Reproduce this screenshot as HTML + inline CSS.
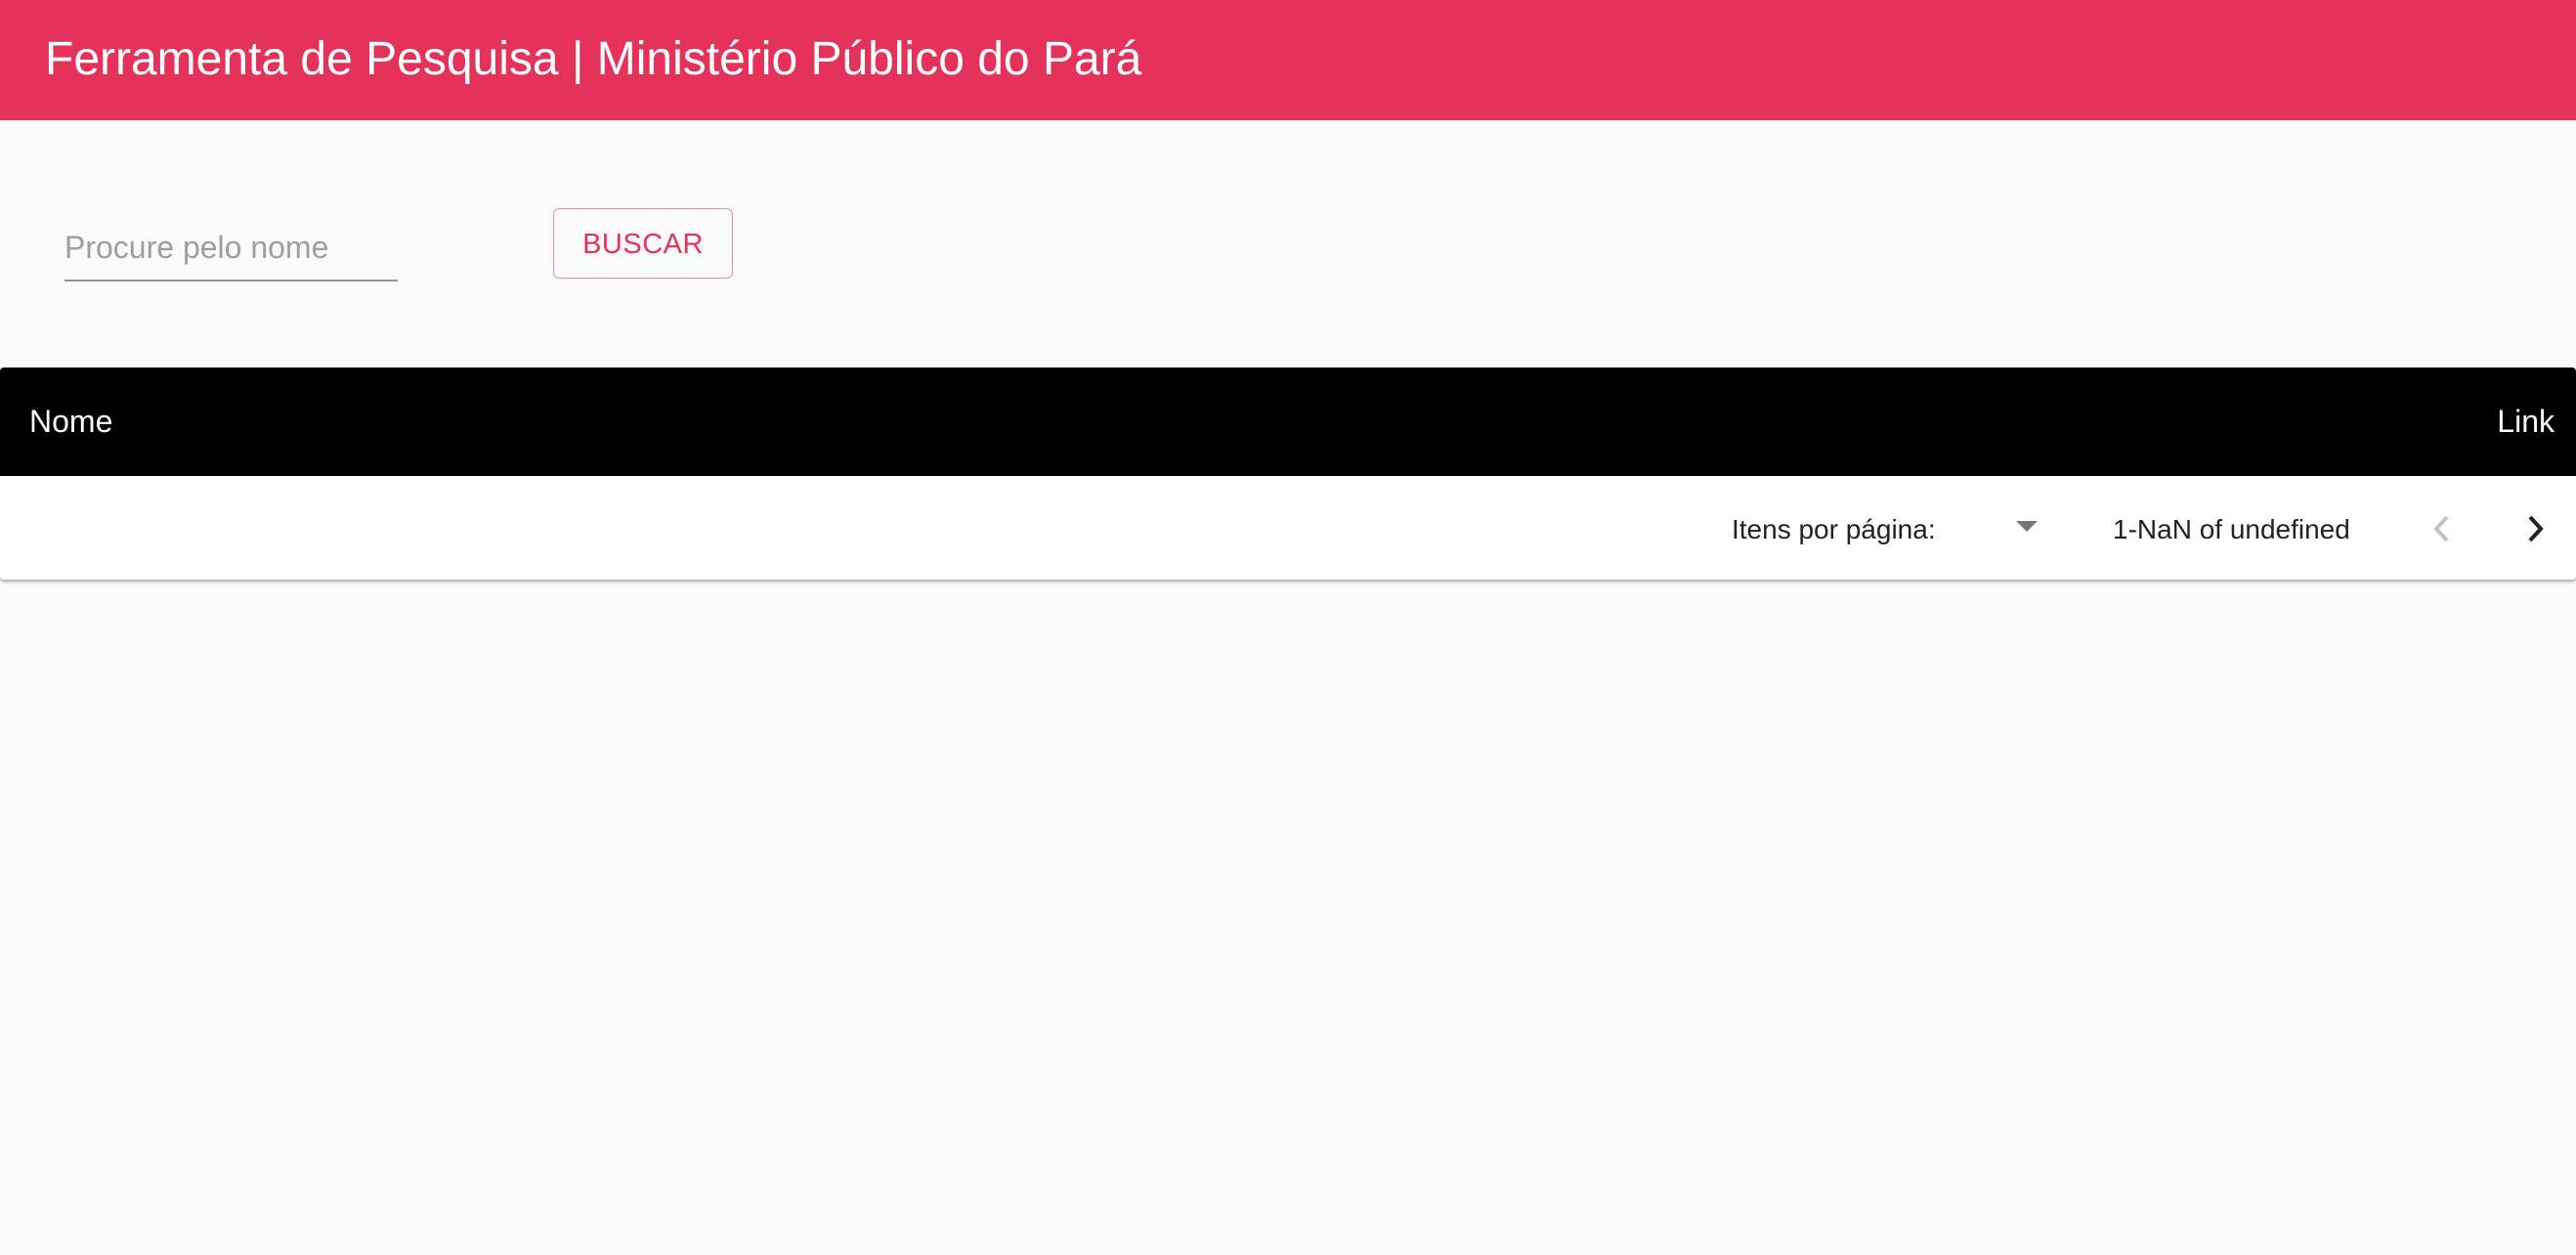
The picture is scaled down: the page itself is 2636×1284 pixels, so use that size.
<!DOCTYPE html>
<html><head><meta charset="utf-8"><style>
html,body{margin:0;padding:0;width:2636px;height:1284px;background:#fafafa;font-family:"Liberation Sans",Arial,sans-serif;overflow:hidden;position:relative}
.hdr{position:absolute;left:0;top:0;width:2636px;height:123px;background:#e5325b}
.hdr span{position:absolute;left:46px;top:33px;font-size:48px;color:#fff;line-height:56px;white-space:nowrap}
.ph{position:absolute;left:66px;top:234px;font-size:32px;color:#9e9e9e;line-height:38px}
.ul{position:absolute;left:66px;top:286px;width:341px;height:2px;background:#949494}
.btn{position:absolute;left:566px;top:213px;width:184px;height:72px;border:1.5px solid #ef8aa3;border-radius:6px;box-sizing:border-box;color:#e5325b;font-size:29px;text-align:center;line-height:73px;letter-spacing:0.5px}
.th{position:absolute;left:0;top:376px;width:2636px;height:111px;background:#000;border-radius:4px 4px 0 0}
.t{position:absolute;color:#fff;font-size:32px;line-height:38px}
.card{position:absolute;left:0;top:487px;width:2636px;height:106px;background:#fff;box-shadow:0 2px 3px rgba(0,0,0,.35);border-radius:0 0 4px 4px}
.p{position:absolute;font-size:28px;color:#222;line-height:34px;top:525px}
</style></head><body>
<div class="hdr"><span>Ferramenta de Pesquisa | Ministério Público do Pará</span></div>
<div class="ph">Procure pelo nome</div>
<div class="ul"></div>
<div class="btn">BUSCAR</div>
<div class="th"></div>
<div class="t" style="left:30px;top:412px">Nome</div>
<div class="t" style="right:22px;top:412px">Link</div>
<div class="card"></div>
<div class="p" style="left:1772px">Itens por página:</div>
<svg style="position:absolute;left:2063px;top:533px" width="22" height="12"><polygon points="0,0 22,0 11,11" fill="#757575"/></svg>
<div class="p" style="left:2162px">1-NaN of undefined</div>
<svg style="position:absolute;left:2486px;top:526px" width="24" height="30"><polyline points="18,3 7,15 18,27" fill="none" stroke="#c2c2c2" stroke-width="4"/></svg>
<svg style="position:absolute;left:2583px;top:526px" width="24" height="30"><polyline points="6,3 17,15 6,27" fill="none" stroke="#222" stroke-width="4"/></svg>
</body></html>
